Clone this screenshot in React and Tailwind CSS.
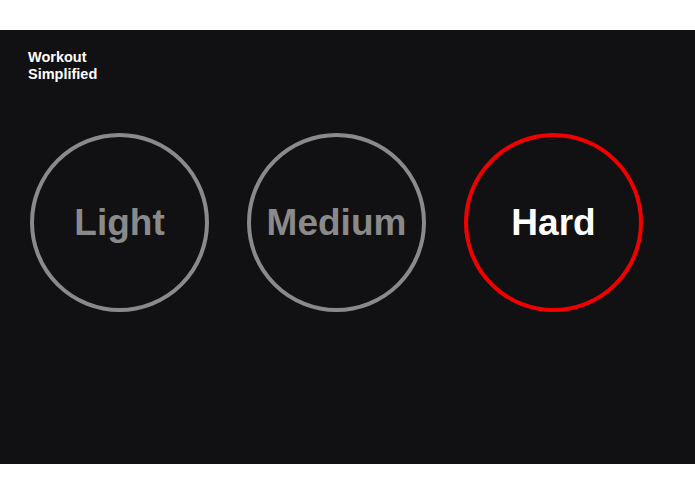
import React from "react";

const levels = [
  { label: "Light", active: false },
  { label: "Medium", active: false },
  { label: "Hard", active: true },
];

export default function App() {
  return (
    <div className="min-h-screen bg-white pt-[30px] font-['Liberation_Sans',Arial,sans-serif]">
      <div className="h-[434px] bg-[#111113] pt-[19px] pl-[28px]">
        {/* Brand */}
        <p className="text-[14.5px] leading-[17px] font-bold text-white">
          Workout
          <br />
          Simplified
        </p>

        {/* Intensity picker */}
        <div className="mt-[50px] ml-[2px] flex gap-[38px]">
          {levels.map(level => (
            <button
              key={level.label}
              className={`flex h-[179px] w-[179px] items-center justify-center rounded-full border-4 text-[37px] font-bold ${
                level.active
                  ? "border-[#f20000] text-white"
                  : "border-[#8a8a8a] text-[#8a8a8a]"
              }`}
            >
              {level.label}
            </button>
          ))}
        </div>
      </div>
    </div>
  );
}
